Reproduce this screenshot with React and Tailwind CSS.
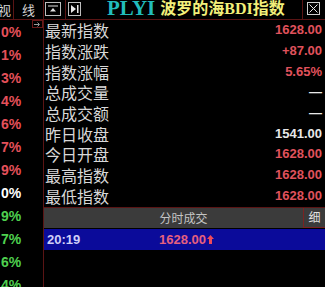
import React from 'react';

const cjk = { fontFamily: '"Noto Sans CJK SC", "Noto Sans", sans-serif' };
const num = { fontFamily: '"Liberation Sans", Arial, sans-serif' };
const serif = { fontFamily: '"Liberation Serif", "Noto Sans CJK SC", serif' };

const side = [
  ['0%', 'text-[#e5505a]'],
  ['1%', 'text-[#e5505a]'],
  ['3%', 'text-[#e5505a]'],
  ['4%', 'text-[#e5505a]'],
  ['6%', 'text-[#e5505a]'],
  ['7%', 'text-[#e5505a]'],
  ['9%', 'text-[#e5505a]'],
  ['0%', 'text-white'],
  ['9%', 'text-[#4fd04f]'],
  ['7%', 'text-[#4fd04f]'],
  ['6%', 'text-[#4fd04f]'],
  ['4%', 'text-[#4fd04f]'],
];

const rows = [
  ['最新指数', '1628.00', 'text-[#e0525c]'],
  ['指数涨跌', '+87.00', 'text-[#e0525c]'],
  ['指数涨幅', '5.65%', 'text-[#e0525c]'],
  ['总成交量', '—', 'text-[#e8e8e8]'],
  ['总成交额', '—', 'text-[#e8e8e8]'],
  ['昨日收盘', '1541.00', 'text-[#e8e8e8]'],
  ['今日开盘', '1628.00', 'text-[#e0525c]'],
  ['最高指数', '1628.00', 'text-[#e0525c]'],
  ['最低指数', '1628.00', 'text-[#e0525c]'],
];

function TopIcon() {
  return (
    <svg width="16" height="14" viewBox="0 0 16 14">
      <rect x="0.5" y="0.5" width="15" height="13" fill="none" stroke="#bdbdbd" />
      <line x1="3" y1="4" x2="13" y2="4" stroke="#e0e0e0" />
      <path d="M8 6 L11 9.5 L5 9.5 Z" fill="#e0e0e0" />
    </svg>
  );
}

function EndIcon() {
  return (
    <svg width="13" height="14" viewBox="0 0 13 14">
      <rect x="0.5" y="0.5" width="12" height="13" fill="none" stroke="#bdbdbd" />
      <path d="M3 3 L8 7 L3 11 Z" fill="#e8e8e8" />
      <rect x="9" y="3" width="1.5" height="8" fill="#e8e8e8" />
    </svg>
  );
}

export default function App() {
  return (
    <div className="w-[325px] h-[287px] bg-black overflow-hidden flex flex-col select-none">
      {/* header */}
      <div className="flex h-[20px] shrink-0 border-b border-[#5a1414] items-stretch">
        <div className="w-[14px] border-r border-[#5a1414] overflow-hidden flex items-center">
          <span className="text-[13px] leading-[19px] text-[#d6d6d6] -ml-[2px]" style={cjk}>视</span>
        </div>
        <div className="w-[30px] border-r border-[#5a1414] flex items-center justify-center">
          <span className="text-[13px] leading-[19px] text-[#d6d6d6]" style={cjk}>线</span>
        </div>
        <div className="w-[22px] border-r border-[#5a1414] flex items-start pt-[2px] pl-[1px]">
          <TopIcon />
        </div>
        <div className="w-[17px] flex items-start pt-[2px] pl-[2px]">
          <EndIcon />
        </div>
        <div className="flex items-start pl-[24px] pt-[0px]">
          <span className="text-[21px] font-bold leading-[17px] text-[#22bcbc]" style={serif}>PLYI</span>
          <span className="text-[16px] font-bold leading-[17px] text-[#f2f07a] ml-[5px]" style={serif}>波罗的海BDI指数</span>
        </div>
        <div className="flex-1" />
        <div className="w-[23px] border-l border-[#5a1414] flex items-start pt-[2px] pl-[4px]">
          <svg width="13" height="13" viewBox="0 0 13 13">
            <rect x="0.5" y="0.5" width="12" height="12" fill="none" stroke="#cfcfcf" />
            <path d="M2.5 2.5 L10.5 10.5 M10.5 2.5 L2.5 10.5" stroke="#e6e6e6" strokeWidth="1" />
          </svg>
        </div>
      </div>

      {/* body */}
      <div className="flex flex-1 min-h-0">
        <div className="relative w-[44px] shrink-0 border-r border-[#5a1414] overflow-hidden">
          {side.map(([v, c], i) => (
            <div key={i} className={`h-[23px] flex items-center pl-[1px] text-[14px] leading-[16px] font-bold ${c}`} style={num}>
              {v}
            </div>
          ))}
          <div className="absolute top-0 right-0 w-[11px] h-[8px] border border-[#6a1a1a] flex items-center justify-center">
            <svg width="7" height="5" viewBox="0 0 7 5">
              <path d="M0 2.5 H5 M3.5 0.5 L5.5 2.5 L3.5 4.5" stroke="#9a9a9a" fill="none" strokeWidth="1" />
            </svg>
          </div>
        </div>

        <div className="flex-1 flex flex-col min-w-0">
          <div className="flex flex-col">
            {rows.map(([label, value, c], i) => (
              <div key={i} className="h-[20.7px] flex items-center justify-between pl-[1px] pr-[3px]">
                <span className="text-[16px] leading-[18px] text-[#d8d8d8]" style={cjk}>{label}</span>
                <span className={`text-[13px] font-bold leading-[16px] ${c}`} style={num}>{value}</span>
              </div>
            ))}
          </div>
          <div className="mt-[0.7px] border-t border-[#5a1414] h-[21px] bg-[#3b3b3b] flex items-stretch">
            <div className="flex-1 flex items-center justify-center pl-[20px]">
              <span className="text-[12px] leading-[16px] text-[#c4c4c4]" style={cjk}>分时成交</span>
            </div>
            <div className="w-[22px] border-l border-b border-[#7a2222] flex items-center justify-center">
              <span className="text-[12px] leading-[16px] text-[#e0e0e0]" style={cjk}>细</span>
            </div>
          </div>
          <div className="mt-[1px] h-[21px] bg-[#0b0b9a] flex items-center">
            <span className="w-[115px] pl-[3px] text-[13px] font-bold text-[#cfcff8]" style={num}>20:19</span>
            <span className="flex items-center text-[13px] font-bold text-[#e6607e]" style={num}>
              1628.00
              <svg width="7" height="9" viewBox="0 0 7 9" className="ml-[1px]">
                <path d="M3.5 0 L7 4 L5 4 L5 9 L2 9 L2 4 L0 4 Z" fill="#ee4a5a" />
              </svg>
            </span>
          </div>
        </div>
      </div>
    </div>
  );
}
